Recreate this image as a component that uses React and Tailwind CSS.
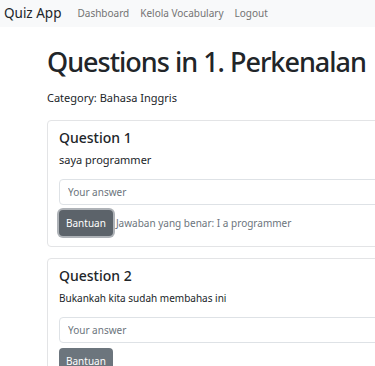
const questions = [
  { id: 1, text: "saya programmer", answer: "I a programmer", showAnswer: true, textSize: "text-[11px]" },
  { id: 2, text: "Bukankah kita sudah membahas ini", answer: "", showAnswer: false, textSize: "text-[10px]" },
];

const QuestionCard = ({ q }) => {
  return (
    <div className="bg-white border border-[#e3e4e6] rounded-[4px] px-[11px] pt-[8px] pb-[10px]">
      <h5 className="text-[14px] leading-[17px] font-medium text-[#212529] mb-[6px]">Question {q.id}</h5>
      <p className={`${q.textSize} leading-[16px] text-[#212529] mb-[11px]`}>{q.text}</p>

      <input
        type="text"
        placeholder="Your answer"
        className="block w-full h-[26px] px-[8px] text-[10px] border border-[#dee2e6] rounded-[4px] placeholder-[#6c757d] outline-none"
      />

      <div className="flex items-center mt-[5px]">
        {q.showAnswer ? (
          <button className="h-[26px] px-[7px] text-[10px] text-white bg-[#5c636a] rounded-[4px] ring-2 ring-[#aeb2b7]">
            Bantuan
          </button>
        ) : (
          <button className="h-[26px] px-[7px] text-[10px] text-white bg-[#6c757d] rounded-[4px]">
            Bantuan
          </button>
        )}
        {q.showAnswer && (
          <span className="ml-[3px] text-[10px] text-[#6c757d]">Jawaban yang benar: {q.answer}</span>
        )}
      </div>
    </div>
  );
};

export default function App() {
  return (
    <div className="w-[375px] h-[366px] overflow-hidden bg-white" style={{ fontFamily: '"Noto Sans", sans-serif' }}>
      {/* Navbar */}
      <nav className="h-[27px] bg-[#f8f9fa] flex items-center pl-[4px]">
        <span className="text-[13.5px] text-[#212529] mr-[16px]">Quiz App</span>
        <div className="flex gap-[11px] text-[10px] text-[#737373]">
          <a>Dashboard</a>
          <a>Kelola Vocabulary</a>
          <a>Logout</a>
        </div>
      </nav>

      <div className="pl-[47px] w-[420px]">
        <h1 className="text-[27px] leading-[34px] font-medium tracking-[-1px] text-[#212529] mt-[18px] mb-[11px]">
          Questions in 1. Perkenalan
        </h1>
        <p className="text-[11px] leading-[16px] text-[#212529] mb-[14px]">Category: Bahasa Inggris</p>

        <div className="flex flex-col gap-[11px]">
          {questions.map((q) => (
            <QuestionCard key={q.id} q={q} />
          ))}
        </div>
      </div>
    </div>
  );
}
